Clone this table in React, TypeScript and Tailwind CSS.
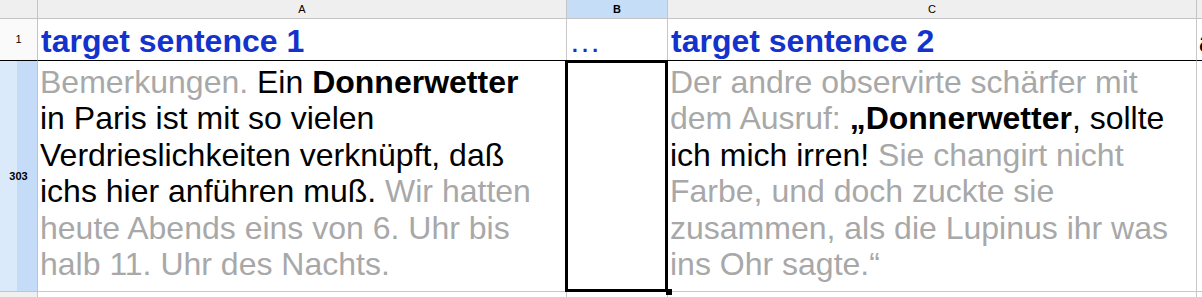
const gray = "text-[#a8a8a8]";

function ColHead({ label, active }: { label: string; active?: boolean }) {
  return (
    <div
      className={`flex items-center justify-center border-r border-b border-[#c4c4c4] text-[11px] text-black ${
        active ? "bg-[#c6ddf7] font-bold" : "bg-[#efefef]"
      }`}
    >
      {label}
    </div>
  );
}

export default function App() {
  return (
    <div className="w-[1202px] h-[297px] overflow-hidden bg-white font-['Liberation_Sans',Arial,sans-serif]">
      <div className="grid grid-cols-[38px_529px_101px_529px_1fr] grid-rows-[19px_42px_231px_20px]">
        {/* header row */}
        <div className="border-r border-b border-[#c4c4c4] bg-[#efefef]" />
        <ColHead label="A" />
        <ColHead label="B" active />
        <ColHead label="C" />
        <div className="border-b border-[#c4c4c4] bg-[#efefef]" />

        {/* row 1 */}
        <div className="flex items-center justify-center border-r border-[#c4c4c4] border-b border-b-black bg-[#fafafa] text-[11px] text-black">
          1
        </div>
        <div className="border-r border-[#c8c8c8] border-b border-b-black pl-[3px] pt-[4px] text-[32px] leading-[36.4px] font-bold text-[#1432cc] whitespace-nowrap">
          target sentence 1
        </div>
        <div className="border-r border-[#c8c8c8] border-b border-b-black pl-[2px] pt-[4px] text-[32px] leading-[36.4px] text-[#1432cc] whitespace-nowrap">
          …
        </div>
        <div className="border-r border-[#c8c8c8] border-b border-b-black pl-[3px] pt-[4px] text-[32px] leading-[36.4px] font-bold text-[#1432cc] whitespace-nowrap">
          target sentence 2
        </div>
        <div className="border-b border-b-black pl-[2px] pt-[4px] text-[32px] leading-[36.4px] font-bold text-black whitespace-nowrap overflow-hidden">
          an
        </div>

        {/* row 303 */}
        <div className="flex items-center justify-center border-r border-b border-[#c4c4c4] bg-[linear-gradient(to_right,#dbeafb_17px,#c4dcf7_17px)] text-[11px] font-semibold text-black">
          303
        </div>
        <div className="border-r border-b border-[#c8c8c8] pl-[2px] pt-[3px] text-[32px] leading-[36.4px] text-black whitespace-nowrap">
          <span className={gray}>Bemerkungen.</span> Ein <b>Donnerwetter</b>
          <br />
          in Paris ist mit so vielen
          <br />
          Verdrieslichkeiten verknüpft, daß
          <br />
          ichs hier anführen muß. <span className={gray}>Wir hatten</span>
          <br />
          <span className={gray}>heute Abends eins von 6. Uhr bis</span>
          <br />
          <span className={gray}>halb 11. Uhr des Nachts.</span>
        </div>
        <div className="relative border-r border-b border-[#c8c8c8]">
          <div className="absolute -left-[2px] -top-[1px] -right-[1px] -bottom-[1px] border-[3px] border-black" />
          <div className="absolute -right-[5px] -bottom-[4px] w-[6px] h-[6px] bg-black" />
        </div>
        <div className="border-r border-b border-[#c8c8c8] pl-[2px] pt-[3px] text-[32px] leading-[36.4px] text-black whitespace-nowrap">
          <span className={gray}>Der andre observirte schärfer mit</span>
          <br />
          <span className={gray}>dem Ausruf: </span>
          <b>„Donnerwetter</b>, sollte
          <br />
          ich mich irren! <span className={gray}>Sie changirt nicht</span>
          <br />
          <span className={gray}>Farbe, und doch zuckte sie</span>
          <br />
          <span className={gray}>zusammen, als die Lupinus ihr was</span>
          <br />
          <span className={gray}>ins Ohr sagte.“</span>
        </div>
        <div className="border-b border-[#c8c8c8]" />

        {/* row 304 */}
        <div className="border-r border-[#c4c4c4] bg-[#f0f0f0]" />
        <div className="border-r border-[#c8c8c8]" />
        <div className="border-r border-[#c8c8c8]" />
        <div className="border-r border-[#c8c8c8]" />
        <div />
      </div>
    </div>
  );
}
